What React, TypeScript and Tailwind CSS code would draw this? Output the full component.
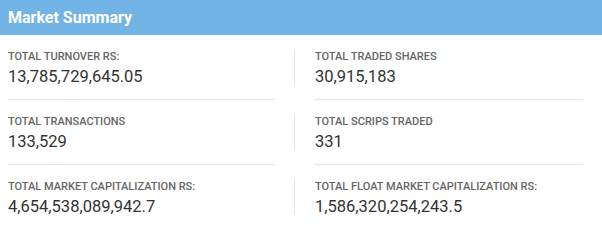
import React from "react";

type Item = { label: string; value: string };

const rows: [Item, Item][] = [
  [
    { label: "TOTAL TURNOVER RS:", value: "13,785,729,645.05" },
    { label: "TOTAL TRADED SHARES", value: "30,915,183" },
  ],
  [
    { label: "TOTAL TRANSACTIONS", value: "133,529" },
    { label: "TOTAL SCRIPS TRADED", value: "331" },
  ],
  [
    { label: "TOTAL MARKET CAPITALIZATION RS:", value: "4,654,538,089,942.7" },
    { label: "TOTAL FLOAT MARKET CAPITALIZATION RS:", value: "1,586,320,254,243.5" },
  ],
];

function Cell({ item, last, className }: { item: Item; last: boolean; className: string }) {
  return (
    <div className={`${className} ${last ? "" : "border-b border-[#e6e6e6] pb-[12px]"}`}>
      <div className="text-[11px] leading-[14px] font-medium text-[#666666]">{item.label}</div>
      <div className="mt-[2px] text-[16.5px] leading-[21px] text-[#333333]">{item.value}</div>
    </div>
  );
}

export default function App() {
  return (
    <div className="w-[602px] h-[242px] bg-white" style={{ fontFamily: "Roboto, 'Liberation Sans', sans-serif" }}>
      <div className="h-[35px] bg-[#73b4e7] px-2 flex items-center text-white font-bold text-[16px]">
        Market Summary
      </div>
      <div className="pt-[15px] flex flex-col gap-[15px]">
        {rows.map((r, i) => {
          const last = i === rows.length - 1;
          return (
            <div key={i} className="flex items-start">
              <Cell item={r[0]} last={last} className="ml-2 w-[267px]" />
              <div className="ml-[19px] w-px h-[35px] bg-[#e3e3e3]" />
              <Cell item={r[1]} last={last} className="ml-[20px] w-[268px]" />
            </div>
          );
        })}
      </div>
    </div>
  );
}
